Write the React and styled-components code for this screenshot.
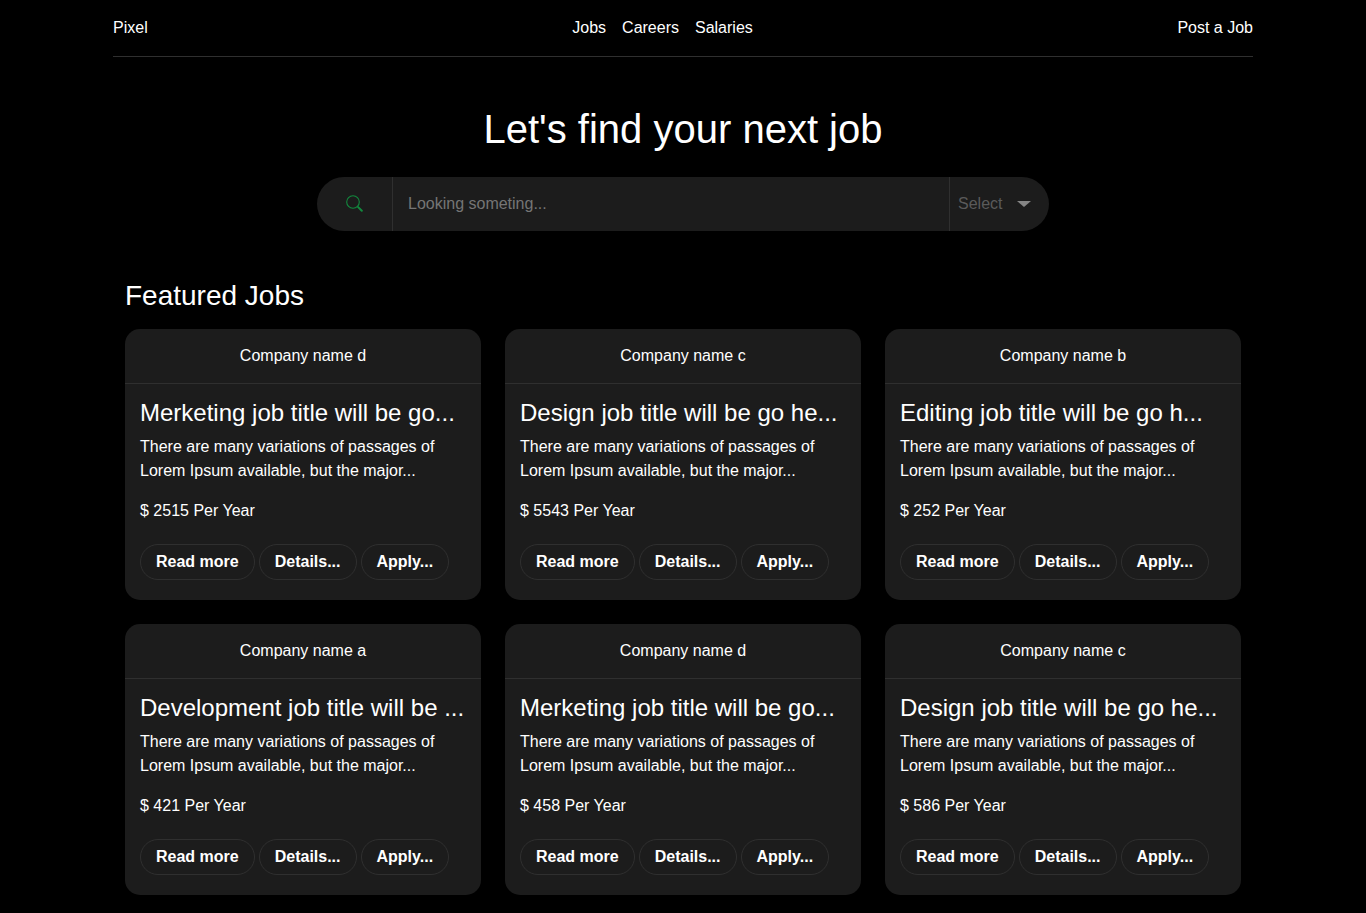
import React from 'react';
import styled, {createGlobalStyle} from 'styled-components';

const GlobalStyle = createGlobalStyle`
  * {
    box-sizing: border-box;
  }

  body {
    margin: 0;
    background: #000;
    color: #fff;
    font-family: "Liberation Sans", Arial, sans-serif;
    font-size: 16px;
    line-height: 24px;
  }
`

const Container = styled.div`
  max-width: 1140px;
  margin: 0 auto;
`

const Header = styled.header`
  display: flex;
  justify-content: space-between;
  padding: 16px 0;
  border-bottom: 1px solid #2f2f2f;
`

const Nav = styled.nav`
  display: flex;
  gap: 16px;
`

const NavLink = styled.a`
  color: #fff;
  text-decoration: none;
`

const Hero = styled.section`
  display: flex;
  flex-direction: column;
  gap: 24px;
  padding: 48px 12px;
`

const HeroTitle = styled.h1`
  margin: 0;
  font-size: 40px;
  font-weight: 400;
  line-height: 48px;
  text-align: center;
`

const SearchBar = styled.form`
  display: flex;
  width: 100%;
  max-width: 732px;
  height: 54px;
  margin: 0 auto;
  background: #1c1c1c;
  border-radius: 27px;
  overflow: hidden;
`

const SearchButton = styled.button`
  display: flex;
  align-items: center;
  justify-content: center;
  width: 75px;
  padding: 0 0 2px;
  border: 0;
  background: none;
  color: #128a3e;
`

const SearchInput = styled.input`
  flex: 1;
  min-width: 0;
  padding: 0 15px;
  border: solid #2f2f2f;
  border-width: 0 1px;
  background: none;
  color: #fff;
  font: inherit;
  outline: none;

  &::placeholder {
    color: #757575;
  }
`

const SelectBox = styled.div`
  display: grid;
  grid-template-columns: minmax(0, 1fr);
  align-items: center;
  width: 99px;
`

const Select = styled.select`
  grid-area: 1 / 1;
  width: 100%;
  height: 100%;
  padding: 0 32px 0 8px;
  border: 0;
  appearance: none;
  background: none;
  color: #5a5a5a;
  font: inherit;
  outline: none;
`

const Arrow = styled.svg`
  grid-area: 1 / 1;
  justify-self: end;
  margin-right: 18px;
  fill: #858585;
  pointer-events: none;
`

const Featured = styled.section`
  padding: 0 12px;
`

const SectionTitle = styled.h2`
  margin: 0 0 16px;
  font-size: 28px;
  font-weight: 400;
  line-height: 34px;
`

const JobGrid = styled.div`
  display: grid;
  grid-template-columns: repeat(3, minmax(0, 1fr));
  gap: 24px;
`

const Card = styled.article`
  background: #1c1c1c;
  border-radius: 15px;
`

const CardHeader = styled.div`
  padding: 15px;
  border-bottom: 1px solid #2f2f2f;
  text-align: center;
`

const CardBody = styled.div`
  padding: 15px 15px 20px;
`

const JobTitle = styled.h3`
  margin: 0 0 8px;
  font-size: 24px;
  font-weight: 400;
  line-height: 28px;
`

const Text = styled.p`
  margin: 0 0 16px;
`

const Actions = styled.div`
  display: flex;
  gap: 4px;
  padding-top: 5px;
`

const PillButton = styled.button`
  height: 36px;
  padding: 0 15px;
  border: 1px solid #2f2f2f;
  border-radius: 18px;
  background: none;
  color: #fff;
  font: inherit;
  font-weight: 700;
`

const description = 'There are many variations of passages of Lorem Ipsum available, but the major...';

const jobs = [
  {id: 1, company: 'Company name d', title: 'Merketing job title will be go...', salary: 2515},
  {id: 2, company: 'Company name c', title: 'Design job title will be go he...', salary: 5543},
  {id: 3, company: 'Company name b', title: 'Editing job title will be go h...', salary: 252},
  {id: 4, company: 'Company name a', title: 'Development job title will be ...', salary: 421},
  {id: 5, company: 'Company name d', title: 'Merketing job title will be go...', salary: 458},
  {id: 6, company: 'Company name c', title: 'Design job title will be go he...', salary: 586},
];

function SearchIcon() {
  return (
      <svg width="17" height="17" viewBox="0 0 17 17" fill="none" stroke="currentColor" aria-hidden="true">
        <circle cx="7" cy="7" r="6.3" strokeWidth="1.1"/>
        <path d="M11.4 11.4l1.4 1.4" strokeWidth="1.1"/>
        <path d="M12.4 12.4l3.4 3.4" strokeWidth="2" strokeLinecap="round"/>
      </svg>
  )
}

function JobCard({job}) {
  return (
      <Card>
        <CardHeader>{job.company}</CardHeader>
        <CardBody>
          <JobTitle>{job.title}</JobTitle>
          <Text>{description}</Text>
          <Text>$ {job.salary} Per Year</Text>
          <Actions>
            <PillButton type="button">Read more</PillButton>
            <PillButton type="button">Details...</PillButton>
            <PillButton type="button">Apply...</PillButton>
          </Actions>
        </CardBody>
      </Card>
  )
}

function App() {
  return (
      <Container>
        <GlobalStyle/>
        <Header>
          <NavLink href="#">Pixel</NavLink>
          <Nav>
            <NavLink href="#jobs">Jobs</NavLink>
            <NavLink href="#careers">Careers</NavLink>
            <NavLink href="#salaries">Salaries</NavLink>
          </Nav>
          <NavLink href="#post">Post a Job</NavLink>
        </Header>
        <main>
          <Hero>
            <HeroTitle>Let's find your next job</HeroTitle>
            <SearchBar onSubmit={e => e.preventDefault()}>
              <SearchButton type="submit" aria-label="Search">
                <SearchIcon/>
              </SearchButton>
              <SearchInput type="text" aria-label="Search jobs" placeholder="Looking someting..."/>
              <SelectBox>
                <Select aria-label="Job category" defaultValue="">
                  <option value="">Select</option>
                  <option value="design">Design</option>
                  <option value="development">Development</option>
                  <option value="editing">Editing</option>
                </Select>
                <Arrow width="14" height="6" viewBox="0 0 14 6" aria-hidden="true">
                  <path d="M0 0h14L7 6z"/>
                </Arrow>
              </SelectBox>
            </SearchBar>
          </Hero>
          <Featured id="jobs">
            <SectionTitle>Featured Jobs</SectionTitle>
            <JobGrid>
              {jobs.map(job => <JobCard key={job.id} job={job}/>)}
            </JobGrid>
          </Featured>
        </main>
      </Container>
  )
}

export default App;
